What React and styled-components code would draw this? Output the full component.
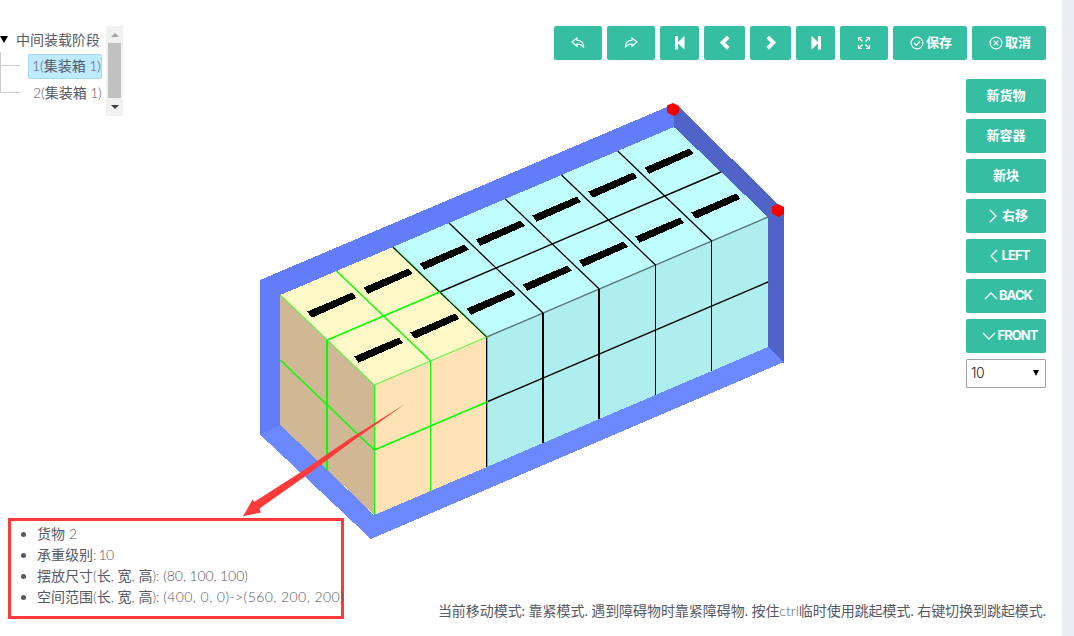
import React from "react";
import styled, { createGlobalStyle } from "styled-components";

const Global = createGlobalStyle`
  * { box-sizing: border-box; }
  body {
    margin: 0;
    background: #fff;
    color: #575962;
    font: 400 14px/21px Lato, "Noto Sans CJK SC", sans-serif;
    overflow: hidden;
  }
`;

const Page = styled.div`
  position: relative;
  display: flex;
  width: 1074px;
  height: 636px;
  overflow: hidden;
`;
const Scene = styled.svg`
  position: absolute;
  inset: 0;
`;
const Main = styled.main`
  position: relative;
  display: flex;
  flex-direction: column;
  justify-content: space-between;
  width: 1062px;
  padding: 26px 16px 14px 0;
`;
const Gutter = styled.div`
  position: relative;
  width: 12px;
  background: #ecedf4;
`;
const Upper = styled.div`
  display: flex;
  justify-content: space-between;
  align-items: flex-start;
`;
const Lower = styled.div`
  display: flex;
  justify-content: space-between;
  align-items: flex-end;
`;

const TreePanel = styled.div`
  display: flex;
  width: 123px;
  height: 90px;
`;
const TreeBody = styled.div`
  flex: 1;
  min-width: 0;
  white-space: nowrap;
`;
const TreeRoot = styled.div`
  display: flex;
  align-items: center;
  height: 26px;
  gap: 8px;
`;
const TreeBranch = styled.div`
  display: flex;
  align-items: center;
  height: 27px;
`;
const Connector = styled.span`
  width: 20px;
  height: ${(p) => (p.$first ? 14 : 27)}px;
  margin: ${(p) => (p.$first ? -13 : -27)}px 8px 0 0;
  border: solid #ccc;
  border-width: 0 0 1px 1px;
`;
const Node = styled.span`
  display: flex;
  align-items: center;
  width: 74px;
  height: 25px;
  padding: 0 0 2px ${(p) => (p.$on ? 3 : 4)}px;
  margin-top: 2px;
  border: 1px solid ${(p) => (p.$on ? "#a5d9f2" : "transparent")};
  border-radius: 2px;
  background: ${(p) => (p.$on ? "#beebff" : "transparent")};
`;
const Latin = styled.span`
  font-weight: 300;
  letter-spacing: ${(p) => p.$track || 0}px;
  white-space: pre;
`;
const Scrollbar = styled.div`
  display: flex;
  flex-direction: column;
  align-items: center;
  justify-content: space-between;
  width: 17px;
  padding: 7px 0;
  background: #f1f1f1;
`;
const Thumb = styled.div`
  width: 13px;
  height: 55px;
  margin-bottom: 2px;
  background: #c1c1c1;
`;

const Controls = styled.div`
  display: flex;
  flex-direction: column;
  align-items: flex-end;
  gap: 19px;
`;
const Toolbar = styled.div`
  display: flex;
  gap: 5px;
`;
const Stack = styled.div`
  display: flex;
  flex-direction: column;
  gap: 6px;
`;
const Button = styled.button`
  display: flex;
  align-items: center;
  justify-content: center;
  gap: ${(p) => p.$gap ?? 2}px;
  width: ${(p) => p.$w || 80}px;
  height: 34px;
  padding: 0 0 0 ${(p) => p.$shift || 0}px;
  border: 0;
  border-radius: 2px;
  background: #36bea3;
  color: #fff;
  font: 700 13px/20px ${(p) => (p.$latin ? "Inter" : "Lato")}, "Noto Sans CJK SC", sans-serif;
  letter-spacing: ${(p) => p.$track || 0}px;
  white-space: nowrap;
`;
const Label = styled.span`
  padding-bottom: 2px;
`;
const Select = styled.div`
  display: flex;
  align-items: center;
  justify-content: space-between;
  width: 80px;
  height: 29px;
  padding: 0 6px 2px 4px;
  border: 1px solid #a0a0a0;
  border-radius: 1px;
  color: #222;
  font: 300 14px Inter, sans-serif;
  letter-spacing: -0.6px;
`;

const InfoBox = styled.div`
  width: 336px;
  height: 101px;
  margin: 0 0 3px 8px;
  border: 3px solid #ff3a3a;
`;
const InfoList = styled.ul`
  margin: 0;
  padding: 2px 0 0 10px;
  list-style: none;
`;
const InfoItem = styled.li`
  display: flex;
  align-items: center;
  height: 21px;
  white-space: pre;
  &::before {
    content: "";
    flex: none;
    width: 5px;
    height: 5px;
    margin: 1px 11px 0 0;
    border-radius: 50%;
    background: #575962;
  }
`;
const Status = styled.div`
  padding-bottom: 1px;
  letter-spacing: -0.05px;
  white-space: pre;
`;

const Icon = ({ size = 14, children, w = 1.15 }) => (
  <svg width={size} height={size} viewBox={`0 0 ${size} ${size}`} fill="none" stroke="#fff" strokeWidth={w}>
    {children}
  </svg>
);
const Undo = () => (
  <Icon>
    <path d="M1 6 6 2v2.2c4 0 6.7 2.2 6.7 7.3-1.2-2.3-3.2-3.5-6.7-3.4v2.2Z" />
  </Icon>
);
const Redo = () => (
  <Icon>
    <path d="M13 6 8 2v2.2c-4 0-6.7 2.2-6.7 7.3 1.2-2.3 3.2-3.5 6.7-3.4v2.2Z" />
  </Icon>
);
const First = () => (
  <Icon>
    <path d="M2 0h3v6L11.5 0v13.4L5 7.4v6H2Z" fill="#fff" stroke="none" />
  </Icon>
);
const Last = () => (
  <Icon>
    <path d="M12 0H9v6L2.5 0v13.4l6.5-6v6h3Z" fill="#fff" stroke="none" />
  </Icon>
);
const Prev = () => (
  <Icon w={3.8}>
    <path d="M10.3.9 4.6 6.6l5.7 5.7" />
  </Icon>
);
const Next = () => (
  <Icon w={3.8}>
    <path d="M3.7.9l5.7 5.7-5.7 5.7" />
  </Icon>
);
const Expand = () => (
  <Icon>
    <path d="M1.5 5V1.5H5M1.5 1.5 5.5 5.5M9 1.5h3.5V5M12.5 1.5l-4 4M1.5 9v3.5H5M1.5 12.5l4-4M9 12.5h3.5V9M12.5 12.5l-4-4" />
  </Icon>
);
const CheckRing = () => (
  <Icon>
    <circle cx="7" cy="7" r="5.9" />
    <path d="m4 7 2.3 2.3L10 5" />
  </Icon>
);
const CrossRing = () => (
  <Icon>
    <circle cx="7" cy="7" r="5.9" />
    <path d="m4.7 4.7 4.6 4.6m0-4.6L4.7 9.3" />
  </Icon>
);
const chevrons = {
  right: "M4 1l6 6-6 6",
  left: "M10 1 4 7l6 6",
  up: "m1 10 6-6 6 6",
  down: "m1 4 6 6 6-6",
};
const Chevron = ({ dir }) => (
  <Icon w={1.3}>
    <path d={chevrons[dir]} />
  </Icon>
);

/* Isometric grid: `l` counts boxes along the length, `d` along the depth, `h` layers down. */
const pt = (l, d, h = 0) => [280.3 + 56.24 * l + 47 * d, 295 - 24 * l + 45 * d + 65 * h];
const poly = (...ps) => ps.map((p) => p.join(",")).join(" ");

const Line = ({ a, b, c = "#000", w = 1.4 }) => (
  <line x1={a[0]} y1={a[1]} x2={b[0]} y2={b[1]} stroke={c} strokeWidth={w} />
);
const GREEN = "#00ff00";

const Cube = ({ x, y }) => (
  <g transform={`translate(${x} ${y})`}>
    <path d="M-6-4 0-6.5 6-3.5V3L0.5 6.5-6 3Z" fill="#f00" />
    <path d="M0.5 1 6-2V3L0.5 6.5Z" fill="#e60000" />
  </g>
);

const Container3D = () => (
  <Scene width="1074" height="636" viewBox="0 0 1074 636">
    <g shapeRendering="crispEdges">
      <polygon points="260,280 674,104 674,300 280,426 260,435" fill="#637dfa" />
      <polygon points="674,104 679,107 784,210 784,363 767,347 674,260" fill="#5064c8" />
      <polygon points="260,434.5 280.5,425 374,515 768,347 784,362 371,539" fill="#6b88ff" />
      <polygon points={poly(pt(0, 0), pt(2, 0), pt(2, 2), pt(0, 2))} fill="#fff9c8" />
      <polygon points={poly(pt(2, 0), pt(7, 0), pt(7, 2), pt(2, 2))} fill="#bfffff" />
      <polygon points={poly(pt(0, 0), pt(0, 2), pt(0, 2, 2), pt(0, 0, 2))} fill="#cfb893" />
      <polygon points={poly(pt(0, 2), pt(2, 2), pt(2, 2, 2), pt(0, 2, 2))} fill="#ffe3b5" />
      <polygon points={poly(pt(2, 2), pt(7, 2), pt(7, 2, 2), pt(2, 2, 2))} fill="#afeeee" />
    </g>
    <Line a={pt(2, 1)} b={pt(7, 1)} />
    <Line a={pt(2, 2, 1)} b={pt(7, 2, 1)} />
    <Line a={pt(2, 2)} b={pt(7, 2)} c="#587777" />
    {[2, 3, 4, 5, 6].map((l) => (
      <Line key={l} a={pt(l, 0)} b={pt(l, 2)} w={1.3} />
    ))}
    <g shapeRendering="crispEdges">
      {[
        [542, 2, 313],
        [598, 2, 289],
        [655, 1, 265],
        [711, 1, 241],
      ].map(([x, w, y]) => (
        <rect key={x} x={x} y={y} width={w} height="130" fill="#000" />
      ))}
      <rect x="486" y="337" width="1" height="130" fill="#000" />
      <rect x="487" y="337" width="1" height="130" fill={GREEN} />
    </g>
    <Line a={pt(0, 1)} b={pt(2, 1)} c={GREEN} />
    <Line a={pt(1, 0)} b={pt(1, 2)} c={GREEN} />
    <Line a={[394, 247]} b={[487.5, 337]} c={GREEN} w={0.7} />
    <Line a={pt(0, 0)} b={pt(0, 2)} c="#66f052" w={1.2} />
    <Line a={pt(0, 2)} b={pt(2, 2)} c="#66f052" w={1.2} />
    <Line a={pt(0, 0, 1)} b={pt(0, 2, 1)} c={GREEN} />
    <Line a={pt(0, 2, 1)} b={pt(2, 2, 1)} c={GREEN} />
    <g shapeRendering="crispEdges" fill={GREEN}>
      <rect x="326" y="340" width="2" height="130" />
      <rect x="374" y="385" width="1" height="130" />
      <rect x="430" y="361" width="1" height="130" />
    </g>
    {[0, 1].map((d) =>
      [0, 1, 2, 3, 4, 5, 6].map((l) => (
        <polygon
          key={`${d}-${l}`}
          shapeRendering="crispEdges"
          points="307.4,311.5 352,292.6 356.5,297.8 311.8,317.8"
          transform={`translate(${56.2 * l + 46.8 * d} ${45 * d - 24 * l})`}
        />
      ))
    )}
    <Cube x={673} y={109.5} />
    <Cube x={778} y={210.5} />
    <polygon
      points="243,516.3 252.5,499.8 254.5,501.8 301,472 350,438.5 405.5,403.8 352,441.5 305,476.5 259.5,508.5 260.8,512.5"
      fill="#ff3a3a"
    />
  </Scene>
);

const SizeTerms = () => (
  <>
    <Latin>(</Latin>长<Latin>, </Latin>宽<Latin>, </Latin>高<Latin>): </Latin>
  </>
);

export default function App() {
  return (
    <>
      <Global />
      <Page>
        <Container3D />
        <Main>
          <Upper>
            <TreePanel>
              <TreeBody>
                <TreeRoot>
                  <svg width="8" height="7">
                    <path d="M0 0h8L4 7Z" fill="#000" />
                  </svg>
                  中间装载阶段
                </TreeRoot>
                <TreeBranch>
                  <Connector $first />
                  <Node $on>
                    <Latin>1(</Latin>集装箱<Latin $track={-0.3}> 1)</Latin>
                  </Node>
                </TreeBranch>
                <TreeBranch>
                  <Connector />
                  <Node>
                    <Latin>2(</Latin>集装箱<Latin $track={-0.3}> 1)</Latin>
                  </Node>
                </TreeBranch>
              </TreeBody>
              <Scrollbar>
                <svg width="8" height="4">
                  <path d="M0 4h8L4 0Z" fill="#a3a3a3" />
                </svg>
                <Thumb />
                <svg width="8" height="4">
                  <path d="M0 0h8L4 4Z" fill="#404040" />
                </svg>
              </Scrollbar>
            </TreePanel>
            <Controls>
              <Toolbar>
                <Button $w={48}><Undo /></Button>
                <Button $w={48}><Redo /></Button>
                <Button $w={39}><First /></Button>
                <Button $w={41}><Prev /></Button>
                <Button $w={41}><Next /></Button>
                <Button $w={39}><Last /></Button>
                <Button $w={48}><Expand /></Button>
                <Button $w={74} $shift={2}><CheckRing /><Label>保存</Label></Button>
                <Button $w={74} $shift={2}><CrossRing /><Label>取消</Label></Button>
              </Toolbar>
              <Stack>
                <Button><Label>新货物</Label></Button>
                <Button><Label>新容器</Label></Button>
                <Button><Label>新块</Label></Button>
                <Button $shift={2}><Chevron dir="right" /><Label>右移</Label></Button>
                <Button $latin $shift={4} $gap={1} $track={-0.9}><Chevron dir="left" /><Label>LEFT</Label></Button>
                <Button $latin $shift={4} $gap={1} $track={-0.9}><Chevron dir="up" /><Label>BACK</Label></Button>
                <Button $latin $shift={8} $gap={1} $track={-0.95}><Chevron dir="down" /><Label>FRONT</Label></Button>
                <Select>
                  10
                  <svg width="6" height="6">
                    <path d="M0 0h6L3 6Z" fill="#000" />
                  </svg>
                </Select>
              </Stack>
            </Controls>
          </Upper>
          <Lower>
            <InfoBox>
              <InfoList>
                <InfoItem>货物<Latin $track={0.3}> 2</Latin></InfoItem>
                <InfoItem>承重级别<Latin $track={-0.8}>: 10</Latin></InfoItem>
                <InfoItem>
                  摆放尺寸<SizeTerms />
                  <Latin $track={-0.1}>(80, 100, 100)</Latin>
                </InfoItem>
                <InfoItem>
                  空间范围<SizeTerms />
                  <Latin $track={0.43}>{"(400, 0, 0)->(560, 200, 200)"}</Latin>
                </InfoItem>
              </InfoList>
            </InfoBox>
            <Status>
              当前移动模式: 靠紧模式. 遇到障碍物时靠紧障碍物. 按住<Latin>ctrl</Latin>临时使用跳起模式. 右键切换到跳起模式.
            </Status>
          </Lower>
        </Main>
        <Gutter />
      </Page>
    </>
  );
}
